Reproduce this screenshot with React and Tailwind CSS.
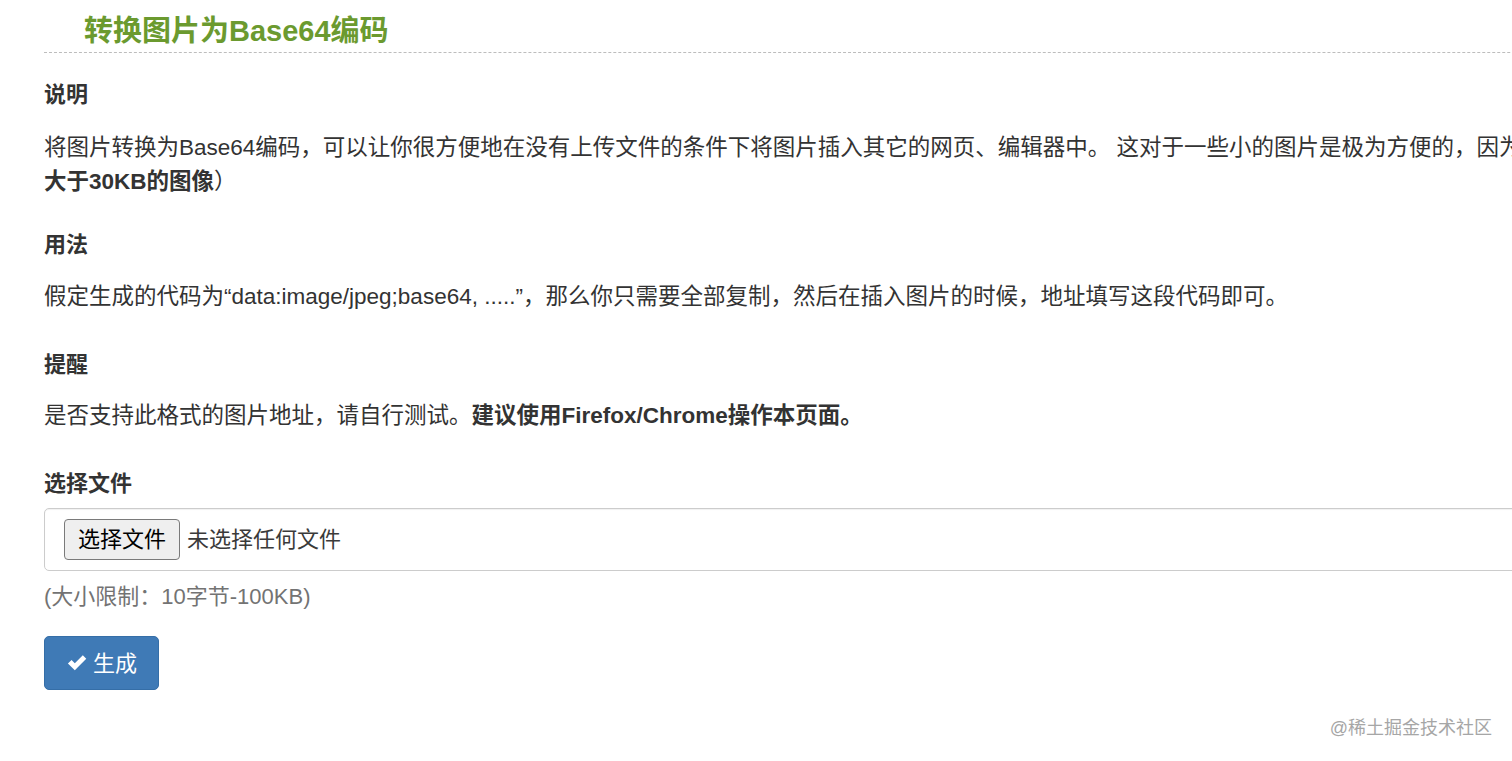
export default function App() {
  const font = { fontFamily: '"Liberation Sans", "Noto Sans CJK SC", sans-serif' };
  return (
    <div className="relative h-[761px] w-[1512px] overflow-hidden bg-white text-[#333]" style={font}>
      <div className="w-[1700px] pl-[44px]">
        <div className="border-b border-dashed border-[#bdbdbd] pt-[14px] pb-[4px] pl-[40px]">
          <h2 className="text-[29px] font-bold leading-[34px] text-[#6b9a2f]">转换图片为Base64编码</h2>
        </div>

        <h4 className="mt-[27px] text-[22px] font-bold leading-[30px]">说明</h4>
        <p className="mt-[21px] w-[1480px] text-[22.5px] leading-[34px]">
          <span className="whitespace-nowrap">
            将图片转换为Base64编码，可以让你很方便地在没有上传文件的条件下将图片插入其它的网页、编辑器中。 这对于一些小的图片是极为方便的，因为
          </span>
          <br />
          <b>大于30KB的图像</b>）
        </p>

        <h4 className="mt-[31px] text-[22px] font-bold leading-[30px]">用法</h4>
        <p className="mt-[20px] text-[22.5px] leading-[34px]">
          假定生成的代码为“data:image/jpeg;base64, .....”，那么你只需要全部复制，然后在插入图片的时候，地址填写这段代码即可。
        </p>

        <h4 className="mt-[36px] text-[22px] font-bold leading-[30px]">提醒</h4>
        <p className="mt-[19px] text-[22.5px] leading-[34px]">
          是否支持此格式的图片地址，请自行测试。<b>建议使用Firefox/Chrome操作本页面。</b>
        </p>

        <h4 className="mt-[36px] text-[22px] font-bold leading-[30px]">选择文件</h4>
        <div className="mt-[9px] flex h-[63px] w-[1600px] items-center rounded-[5px] border border-[#cccccc] pl-[19px] shadow-[inset_0_1px_1px_rgba(0,0,0,0.06)]">
          <button className="h-[41px] w-[116px] rounded-[4px] border border-[#7a7a7a] bg-[#efefef] text-[22px] text-black">
            选择文件
          </button>
          <span className="ml-[7px] text-[22px] text-[#3a3a3a]">未选择任何文件</span>
        </div>
        <p className="mt-[12px] text-[22px] leading-[28px] text-[#737373]">(大小限制：10字节-100KB)</p>

        <button className="mt-[25px] flex h-[54px] w-[115px] items-center justify-center gap-[5px] rounded-[5px] border border-[#356ea7] bg-[#3f7ab6] text-[22px] text-white">
          <svg width="22" height="20" viewBox="0 0 24 22" fill="white">
            <path d="M2 11.5 L6 7.8 L9.6 11.4 L18.4 2.6 L22.2 6.3 L9.6 18.9 Z" />
          </svg>
          生成
        </button>
      </div>

      <div className="absolute right-[20px] bottom-[19px] text-[18px] text-[#a6a6a6]">@稀土掘金技术社区</div>
    </div>
  );
}
